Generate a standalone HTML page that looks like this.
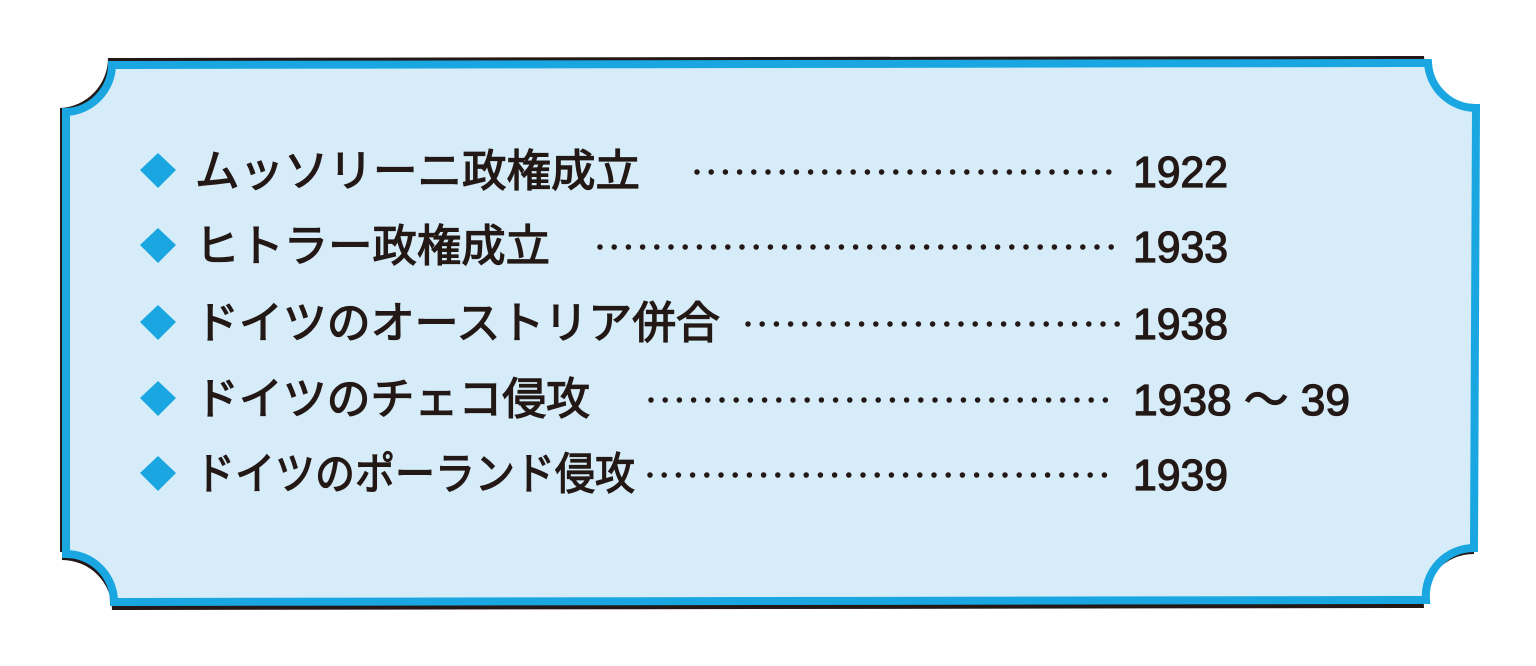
<!DOCTYPE html>
<html><head><meta charset="utf-8"><style>
html,body{margin:0;padding:0;background:#fff;}
svg{display:block}
text{font-family:"Liberation Sans","Noto Sans CJK JP",sans-serif;fill:#231815;stroke:#231815;stroke-width:1.3px;}
</style></head><body>
<svg width="1536" height="666" viewBox="0 0 1536 666" xmlns="http://www.w3.org/2000/svg">
<path d="M110,60 L1426,58 A50,50 0 0 0 1476,106 L1474,548 A50,50 0 0 0 1424,602 L112,604 A50,50 0 0 0 62,554 L62,110 A50,50 0 0 0 110,60 Z" fill="#231815" transform="translate(-2,-2)"/>
<path d="M110,60 L1426,58 A50,50 0 0 0 1476,106 L1474,548 A50,50 0 0 0 1424,602 L112,604 A50,50 0 0 0 62,554 L62,110 A50,50 0 0 0 110,60 Z" fill="#231815" transform="translate(0,6)"/>
<path d="M112,65 L1428,63 A48,48 0 0 0 1476,108 L1474,548 A48,48 0 0 0 1426,600 L114,602 A48,48 0 0 0 66,554 L66,112 A48,48 0 0 0 112,65 Z" fill="#d6ecf9" stroke="#1aa7e1" stroke-width="8"/>
<g fill="#1aa7e1">
<polygon points="158,153 176,170 158,188 140,170"/>
<polygon points="158,228 176,245 158,263 140,245"/>
<polygon points="158,305 176,322 158,340 140,322"/>
<polygon points="158,381 176,398 158,416 140,398"/>
<polygon points="158,456 176,473 158,491 140,473"/>
</g>
<g font-size="44">
<text x="195" y="186" textLength="445" lengthAdjust="spacingAndGlyphs">ムッソリーニ政権成立</text>
<text x="195" y="261" textLength="355" lengthAdjust="spacingAndGlyphs">ヒトラー政権成立</text>
<text x="195" y="338" textLength="525" lengthAdjust="spacingAndGlyphs">ドイツのオーストリア併合</text>
<text x="195" y="414" textLength="395" lengthAdjust="spacingAndGlyphs">ドイツのチェコ侵攻</text>
<text x="195" y="489" textLength="440" lengthAdjust="spacingAndGlyphs">ドイツのポーランド侵攻</text>
</g>
<g stroke="#231815" stroke-width="5.5" stroke-linecap="round" stroke-dasharray="0 14.2">
<line x1="697" y1="172" x2="1118" y2="172"/>
<line x1="600" y1="247" x2="1118" y2="247"/>
<line x1="748" y1="324" x2="1118" y2="324"/>
<line x1="651" y1="400" x2="1118" y2="400"/>
<line x1="650" y1="475" x2="1118" y2="475"/>
</g>
<g font-size="44">
<text x="1133" y="187" textLength="95" lengthAdjust="spacingAndGlyphs">1922</text>
<text x="1133" y="262" textLength="95" lengthAdjust="spacingAndGlyphs">1933</text>
<text x="1133" y="339" textLength="95" lengthAdjust="spacingAndGlyphs">1938</text>
<text x="1133" y="415" textLength="217" lengthAdjust="spacingAndGlyphs">1938 ～ 39</text>
<text x="1133" y="490" textLength="95" lengthAdjust="spacingAndGlyphs">1939</text>
</g>
</svg>
</body></html>
